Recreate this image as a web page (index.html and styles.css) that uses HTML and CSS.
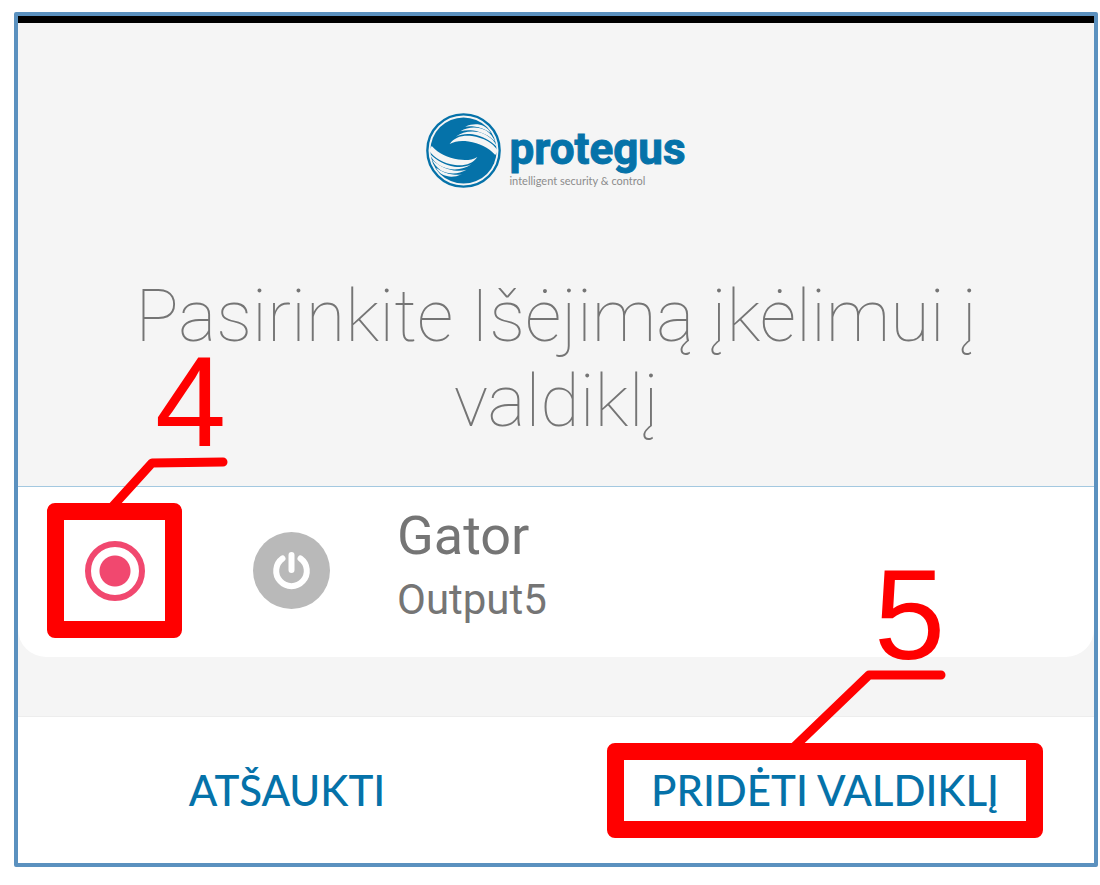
FILE: index.html
```html
<!DOCTYPE html>
<html lang="lt">
<head>
<meta charset="utf-8">
<meta name="viewport" content="width=device-width, initial-scale=1">
<title>Protegus</title>
<link rel="stylesheet" href="styles.css">
</head>
<body>
<main class="screen">
  <header class="intro">
    <div class="brand">
      <svg class="brand-mark" viewBox="0 0 222 222" aria-hidden="true">
        <circle cx="111" cy="111" r="107" fill="#f5f5f5" stroke="#0572a9" stroke-width="7"/>
        <circle cx="111" cy="111" r="98" fill="#0572a9"/>
        <g id="wing" fill="#f5f5f5">
          <path d="M70 92C84 72 106 65 136 68C170 73 198 88 213 112L205 124C184 101 158 89 126 84C102 81 86 83 70 92Z"/>
          <path d="M88 70C110 54 144 50 172 62C192 71 206 86 211 102C190 80 166 68 138 63C118 60 104 63 88 70Z"/>
          <path d="M102 54C126 40 154 40 178 52C190 60 199 71 204 84C186 66 164 56 140 52C124 50 114 51 102 54Z"/>
          <path d="M116 41C138 31 156 32 172 39C181 44 188 51 192 60C178 49 160 42 142 40C132 39 124 39 116 41Z"/>
        </g>
        <use href="#wing" transform="rotate(180 111 111)"/>
      </svg>
      <div class="brand-text">
        <span class="brand-name">protegus</span>
        <span class="brand-tagline">intelligent security &amp; control</span>
      </div>
    </div>
    <h1 class="title">Pasirinkite Išėjimą įkėlimui į valdiklį</h1>
  </header>

  <section class="output">
    <div class="callout callout-radio">
      <input class="radio" type="radio" name="output" id="output5" checked>
      <svg class="leader leader-radio" viewBox="0 0 130 54" aria-hidden="true"><path d="M6 50L45 7L116 6"/></svg>
      <span class="digit digit-radio">4</span>
    </div>
    <svg class="power" viewBox="0 0 77 77" aria-hidden="true">
      <circle cx="38.500" cy="38.500" r="38.500" fill="#b9b9b9"/>
      <path d="M29.500 26.500A15.300 15.300 0 1 0 47.500 26.500M38.500 23V38" fill="none" stroke="#fff" stroke-width="6" stroke-linecap="round"/>
    </svg>
    <label class="output-label" for="output5">
      <span class="output-name">Gator</span>
      <span class="output-id">Output5</span>
    </label>
  </section>

  <footer class="actions">
    <div class="action"><button class="button" type="button">ATŠAUKTI</button></div>
    <div class="action">
      <div class="callout callout-add">
        <button class="button" type="button">PRIDĖTI VALDIKLĮ</button>
        <svg class="leader leader-add" viewBox="0 0 170 84" aria-hidden="true"><path d="M6 80L82 7L154 7"/></svg>
        <span class="digit digit-add">5</span>
      </div>
    </div>
  </footer>
</main>
</body>
</html>
```
FILE: styles.css
```css
* {
  box-sizing: border-box;
}

body {
  margin: 0;
  padding: 12px 2px 18px 14px;
  background: #fff;
  font-family: Roboto, "Liberation Sans", sans-serif;
}

.screen {
  border: 4px solid #5b91bf;
  border-radius: 2px;
  background: #f5f5f5;
}

.intro {
  border-top: 7px solid #000;
  border-bottom: 1px solid #a3c8e0;
  padding: 90px 100px 42px;
}

.brand {
  display: flex;
  justify-content: center;
  gap: 8px;
}

.brand-mark {
  width: 75px;
  height: 75px;
}

.brand-text {
  display: flex;
  flex-direction: column;
  padding-top: 10px;
}

.brand-name {
  color: #0572a9;
  font-size: 44px;
  font-weight: 700;
  line-height: 52px;
  -webkit-text-stroke: 1px #0572a9;
}

.brand-tagline {
  color: #8c8c8c;
  font-family: Lato, sans-serif;
  font-size: 11px;
  line-height: 12px;
}

.title {
  margin: 86px 0 0;
  color: #757575;
  font-size: 72px;
  font-weight: 100;
  line-height: 85px;
  text-align: center;
}

.output {
  display: flex;
  align-items: center;
  padding: 16px 29px 19px;
  border-radius: 0 0 28px 28px;
  background: #fff;
}

.callout {
  position: relative;
  border: 17px solid #f00;
  border-radius: 8px;
}

.callout-radio {
  display: flex;
  align-items: center;
  justify-content: center;
  width: 135px;
  height: 135px;
}

.radio {
  appearance: none;
  width: 60px;
  height: 60px;
  margin: 0;
  border: 6px solid #f1486f;
  border-radius: 50%;
  background: radial-gradient(circle, #f1486f 15px, #fff 16px);
}

.power {
  width: 77px;
  height: 77px;
  margin-left: 71px;
}

.output-label {
  display: flex;
  flex-direction: column;
  margin-left: 67px;
  padding-bottom: 6px;
  color: #757575;
}

.output-name {
  font-size: 54px;
  line-height: 64px;
}

.output-id {
  font-size: 42px;
  line-height: 64px;
}

.actions {
  display: grid;
  grid-template-columns: 1fr 1fr;
  margin-top: 59px;
  padding: 26px 0 25px;
  border-top: 1px solid #ededed;
  background: #fff;
}

.action {
  display: flex;
  align-items: center;
  justify-content: center;
}

.callout-add {
  padding: 0 27px;
}

.button {
  padding: 0;
  border: 0;
  background: none;
  color: #0572a9;
  font-family: Lato, sans-serif;
  font-size: 42px;
  font-weight: 500;
  line-height: 61px;
  white-space: nowrap;
}

.leader {
  position: absolute;
  fill: none;
  stroke: #f00;
  stroke-width: 9px;
  stroke-linecap: round;
  stroke-linejoin: round;
}

.leader-radio {
  top: -64px;
  left: 43px;
  width: 130px;
  height: 54px;
}

.leader-add {
  top: -92px;
  left: 163px;
  width: 170px;
  height: 84px;
}

.digit {
  position: absolute;
  color: #f00;
  font-family: "Liberation Sans", sans-serif;
  font-size: 128px;
  line-height: 90px;
}

.digit-radio {
  top: -163px;
  left: 91px;
}

.digit-add {
  top: -190px;
  left: 250px;
}
```
